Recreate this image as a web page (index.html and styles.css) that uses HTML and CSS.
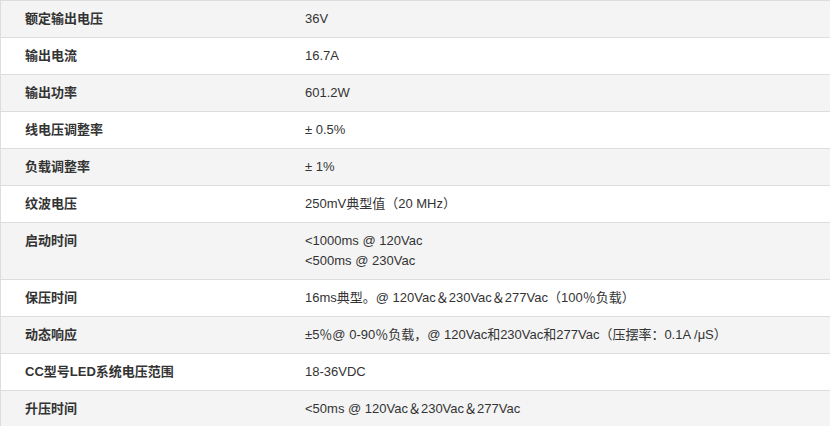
FILE: index.html
```html
<!DOCTYPE html>
<html lang="zh-CN">
<head>
<meta charset="utf-8">
<title>规格</title>
<link rel="stylesheet" href="styles.css">
</head>
<body>
<table class="spec">
<tbody>
<tr><th>额定输出电压</th><td>36V</td></tr>
<tr><th>输出电流</th><td>16.7A</td></tr>
<tr><th>输出功率</th><td>601.2W</td></tr>
<tr><th>线电压调整率</th><td>± 0.5%</td></tr>
<tr><th>负载调整率</th><td>± 1%</td></tr>
<tr><th>纹波电压</th><td>250mV典型值（20 MHz）</td></tr>
<tr><th>启动时间</th><td>&lt;1000ms @ 120Vac<br>&lt;500ms @ 230Vac</td></tr>
<tr><th>保压时间</th><td>16ms典型。@ 120Vac＆230Vac＆277Vac（100％负载）</td></tr>
<tr><th>动态响应</th><td>±5％@ 0-90％负载，@ 120Vac和230Vac和277Vac（压摆率：0.1A /μS）</td></tr>
<tr><th>CC型号LED系统电压范围</th><td>18-36VDC</td></tr>
<tr><th>升压时间</th><td>&lt;50ms @ 120Vac＆230Vac＆277Vac</td></tr>
</tbody>
</table>
</body>
</html>
```
FILE: styles.css
```css
html, body {
  margin: 0;
  padding: 0;
  background: #ffffff;
}
.spec {
  width: 100%;
  border-collapse: collapse;
  font-family: "Liberation Sans", Arial, "Noto Sans CJK SC", sans-serif;
  font-size: 13px;
  line-height: 20px;
  color: #333333;
  border-left: 1px solid #dddddd;
}
.spec tr {
  border-top: 1px solid #dddddd;
}
.spec tr:nth-child(odd) {
  background: #f4f4f4;
}
.spec th,
.spec td {
  padding: 8px 24px;
  vertical-align: top;
  text-align: left;
}
.spec th {
  width: 232px;
  font-weight: bold;
}
.spec td {
  font-weight: normal;
}
```
